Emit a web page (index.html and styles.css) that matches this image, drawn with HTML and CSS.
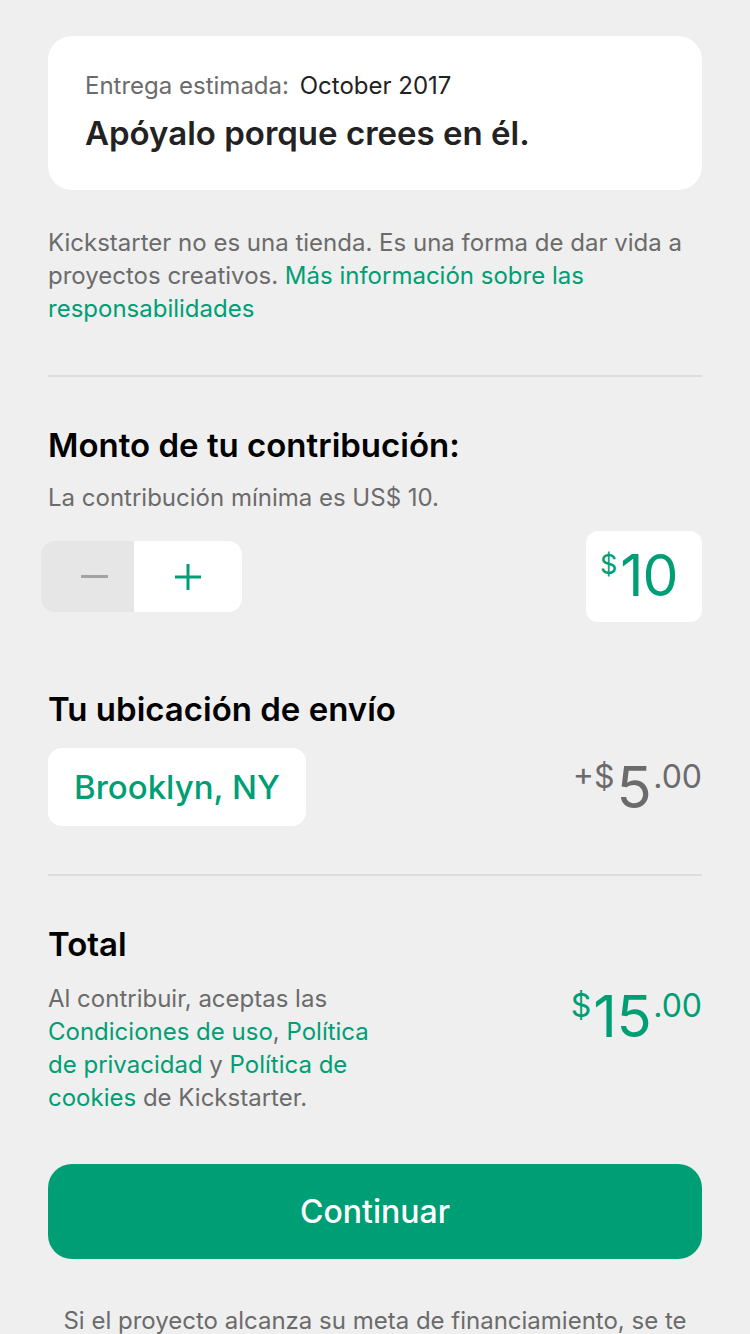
FILE: index.html
```html
<!DOCTYPE html>
<html lang="es">
<head>
<meta charset="utf-8">
<link rel="stylesheet" href="styles.css">
</head>
<body>
<div class="page">
  <section class="card">
    <p class="delivery"><span class="delivery-label">Entrega estimada:</span> <span class="delivery-date">October 2017</span></p>
    <h2 class="card-title">Apóyalo porque crees en él.</h2>
  </section>

  <p class="note">Kickstarter no es una tienda. Es una forma de dar vida a proyectos creativos. <a class="link">Más información sobre las responsabilidades</a></p>

  <hr class="divider">

  <section class="amount">
    <h3 class="heading">Monto de tu contribución:</h3>
    <p class="sub">La contribución mínima es US$ 10.</p>
    <div class="amount-row">
      <div class="stepper">
        <button class="step minus"><span class="minus-bar"></span></button>
        <button class="step plus"><svg width="30" height="30" viewBox="0 0 30 30"><path d="M15 2v26M2 15h26" stroke="#009e74" stroke-width="3"/></svg></button>
      </div>
      <div class="amount-box"><span class="cur">$</span><span class="amt">10</span></div>
    </div>
  </section>

  <section class="shipping">
    <h3 class="heading">Tu ubicación de envío</h3>
    <div class="ship-row">
      <div class="location">Brooklyn, NY</div>
      <div class="price ship-price"><span class="sm">+$</span><span class="big">5</span><span class="sm">.00</span></div>
    </div>
  </section>

  <hr class="divider divider-b">

  <section class="total">
    <h3 class="heading">Total</h3>
    <div class="total-row">
      <p class="terms">Al contribuir, aceptas las <a class="link">Condiciones de uso</a>, <a class="link">Política de privacidad</a> y <a class="link">Política de cookies</a> de Kickstarter.</p>
      <div class="price total-price"><span class="sm">$</span><span class="big">15</span><span class="sm">.00</span></div>
    </div>
  </section>

  <button class="cta">Continuar</button>

  <p class="footnote">Si el proyecto alcanza su meta de financiamiento, se te realizará el cargo.</p>
</div>
</body>
</html>
```

FILE: styles.css
```css
html, body {
  margin: 0;
  padding: 0;
  background: #efefef;
}
body {
  font-family: Inter, Roboto, "Noto Sans", sans-serif;
  color: #1a1a1a;
  width: 750px;
  height: 1334px;
  overflow: hidden;
}
.page {
  padding: 36px 48px 0 48px;
}
.card {
  background: #fff;
  border-radius: 24px;
  padding: 34px 36px 0 37px;
  height: 154px;
  box-sizing: border-box;
}
.delivery {
  margin: 0;
  font-size: 24px;
  line-height: 32px;
}
.delivery-label { color: #6b6b6b; }
.delivery-date { color: #222; margin-left: 4px; }
.card-title {
  margin: 11px 0 0 0;
  font-size: 33px;
  line-height: 40px;
  font-weight: 600;
  color: #222;
}
.note {
  margin: 36px 0 0 0;
  font-size: 24px;
  line-height: 33px;
  color: #6b6b6b;
}
.link {
  color: #009e74;
  text-decoration: none;
}
.divider {
  border: 0;
  border-top: 2px solid #dddddd;
  margin: 50px 0 0 0;
}
.divider-b { margin-top: 48px; }
.amount { padding-top: 48px; }
.heading {
  margin: 0;
  font-size: 33px;
  line-height: 40px;
  font-weight: 600;
  color: #000;
}
.sub {
  margin: 18px 0 0 0;
  font-size: 24px;
  line-height: 30px;
  color: #6b6b6b;
}
.amount-row {
  display: flex;
  justify-content: space-between;
  align-items: center;
  margin-top: 18px;
}
.stepper {
  display: flex;
  margin-left: -7px;
  height: 71px;
  border-radius: 14px;
  overflow: hidden;
}
.step {
  border: 0;
  margin: 0;
  padding: 0;
  display: flex;
  align-items: center;
  justify-content: center;
}
.minus { width: 93px; background: #e6e6e6; }
.minus-bar { width: 27px; height: 3px; background: #a3a3a3; margin-left: 14px; }
.plus { width: 108px; background: #fff; }
.amount-box {
  background: #fff;
  border-radius: 12px;
  width: 116px;
  height: 91px;
  box-sizing: border-box;
  padding-left: 14px;
  display: flex;
  align-items: flex-start;
  justify-content: flex-start;
  color: #009e74;
}
.amount-box .cur {
  font-size: 27px;
  line-height: 1;
  margin-top: 20px;
  margin-right: 3px;
}
.amount-box .amt {
  font-size: 57px;
  line-height: 1;
  margin-top: 16px;
  letter-spacing: -1px;
}
.shipping { padding-top: 67px; }
.ship-row {
  display: flex;
  justify-content: space-between;
  align-items: flex-start;
  margin-top: 19px;
}
.location {
  background: #fff;
  border-radius: 14px;
  height: 78px;
  padding: 0 26px;
  display: flex;
  align-items: center;
  font-size: 33px;
  font-weight: 500;
  color: #009e74;
}
.price {
  display: flex;
  align-items: flex-start;
}
.price .sm {
  font-size: 32px;
  line-height: 1;
  margin-top: 3px;
}
.price .big {
  font-size: 58px;
  line-height: 1;
  letter-spacing: -0.5px;
  margin: 0 2px;
}
.ship-price {
  color: #6b6b6b;
  margin-top: 10px;
}
.total { padding-top: 48px; }
.total-row {
  display: flex;
  justify-content: space-between;
  align-items: flex-start;
  margin-top: 18px;
}
.terms {
  margin: 0;
  width: 335px;
  font-size: 24px;
  line-height: 33px;
  color: #6b6b6b;
}
.total-price {
  color: #009e74;
  margin-top: 5px;
}
.cta {
  display: block;
  width: 100%;
  height: 95px;
  margin-top: 50px;
  border: 0;
  border-radius: 24px;
  background: #009e74;
  color: #fff;
  font-family: inherit;
  font-size: 32px;
  font-weight: 500;
}
.footnote {
  margin: 45px 0 0 0;
  text-align: center;
  font-size: 24px;
  line-height: 33px;
  color: #6b6b6b;
}
```
